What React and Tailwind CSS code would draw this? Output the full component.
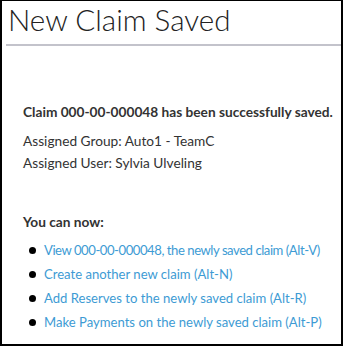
import React from 'react'

const actions = [
    { text: 'View 000-00-000048, the newly saved claim (Alt-V)', tight: true },
    { text: 'Create another new claim (Alt-N)' },
    { text: 'Add Reserves to the newly saved claim (Alt-R)' },
    { text: 'Make Payments on the newly saved claim (Alt-P)' },
]

export default function App() {
    return (
        <div
            className="w-[343px] h-[346px] bg-white border-2 border-t border-black text-[#333] overflow-hidden"
            style={{ fontFamily: 'Lato, "Open Sans", sans-serif' }}
        >
            {/* Page title */}
            <h1 className="pl-[6px] text-[29.6px] font-light leading-[38px] text-[#222]">
                New Claim Saved
            </h1>
            <div className="ml-[4px] mt-[5px] h-[2px] bg-[#c3c3cb]" />

            <div className="pl-[21px] pt-[57px] text-[13.7px]">
                <p className="font-bold leading-[18px]">
                    Claim 000-00-000048 has been successfully saved.
                </p>
                <p className="mt-[11px] leading-[18px]">Assigned Group: Auto1 - TeamC</p>
                <p className="mt-[4px] leading-[18px]">Assigned User: Sylvia Ulveling</p>

                <p className="mt-[41px] font-bold leading-[18px]">You can now:</p>
                <ul className="mt-[10px] flex flex-col gap-[6px] text-[13.1px]">
                    {actions.map((a) => (
                        <li key={a.text} className="flex items-center leading-[18px] whitespace-nowrap">
                            <span className="ml-[6px] mr-[8px] w-[7px] h-[7px] rounded-full bg-black shrink-0" />
                            <a href="#" className={a.tight ? 'text-[#3d9bd4] tracking-[-0.45px]' : 'text-[#3d9bd4]'}>
                                {a.text}
                            </a>
                        </li>
                    ))}
                </ul>
            </div>
        </div>
    )
}
